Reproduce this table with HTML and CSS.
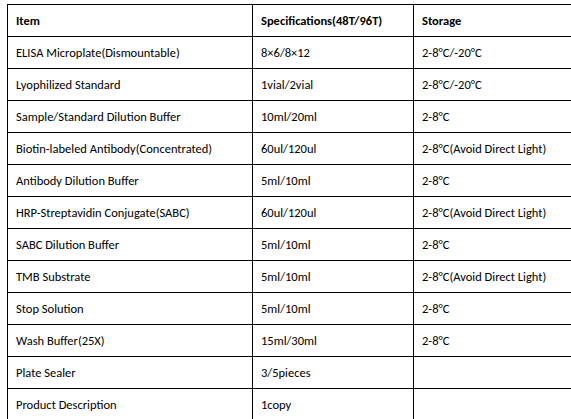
FILE: index.html
```html
<!DOCTYPE html>
<html>
<head>
<meta charset="utf-8">
<link rel="stylesheet" href="styles.css">
</head>
<body>
<div class="frame">
<table class="kit">
  <colgroup>
    <col class="c-item">
    <col class="c-spec">
    <col class="c-store">
  </colgroup>
  <tr class="head"><td>Item</td><td>Specifications(48T/96T)</td><td>Storage</td></tr>
  <tr><td>ELISA Microplate(Dismountable)</td><td>8×6/8×12</td><td>2-8°C/-20°C</td></tr>
  <tr><td>Lyophilized Standard</td><td>1vial/2vial</td><td>2-8°C/-20°C</td></tr>
  <tr><td>Sample/Standard Dilution Buffer</td><td>10ml/20ml</td><td>2-8°C</td></tr>
  <tr><td>Biotin-labeled Antibody(Concentrated)</td><td>60ul/120ul</td><td>2-8°C(Avoid Direct Light)</td></tr>
  <tr><td>Antibody Dilution Buffer</td><td>5ml/10ml</td><td>2-8°C</td></tr>
  <tr><td>HRP-Streptavidin Conjugate(SABC)</td><td>60ul/120ul</td><td>2-8°C(Avoid Direct Light)</td></tr>
  <tr><td>SABC Dilution Buffer</td><td>5ml/10ml</td><td>2-8°C</td></tr>
  <tr><td>TMB Substrate</td><td>5ml/10ml</td><td>2-8°C(Avoid Direct Light)</td></tr>
  <tr><td>Stop Solution</td><td>5ml/10ml</td><td>2-8°C</td></tr>
  <tr><td>Wash Buffer(25X)</td><td>15ml/30ml</td><td>2-8°C</td></tr>
  <tr><td>Plate Sealer</td><td>3/5pieces</td><td></td></tr>
  <tr><td>Product Description</td><td>1copy</td><td></td></tr>
</table>
</div>
</body>
</html>
```

FILE: styles.css
```css
html, body {
  margin: 0;
  padding: 0;
  background: #fff;
  overflow: hidden;
}
body {
  padding: 4px 0 0 7px;
  font-family: Carlito, Lato, "Liberation Sans", sans-serif;
  font-size: 12.5px;
  color: #000;
}
.frame {
  width: 564px;
  overflow: hidden;
}
.kit {
  border-collapse: collapse;
  table-layout: fixed;
  width: 600px;
}
.c-item { width: 245px; }
.c-spec { width: 161px; }
.c-store { width: 194px; }
.kit td {
  border: 1px solid #000;
  height: 32px;
  padding: 0 0 0 8px;
  white-space: nowrap;
  vertical-align: middle;
  box-sizing: border-box;
}
.kit .head td {
  font-weight: bold;
}
```
